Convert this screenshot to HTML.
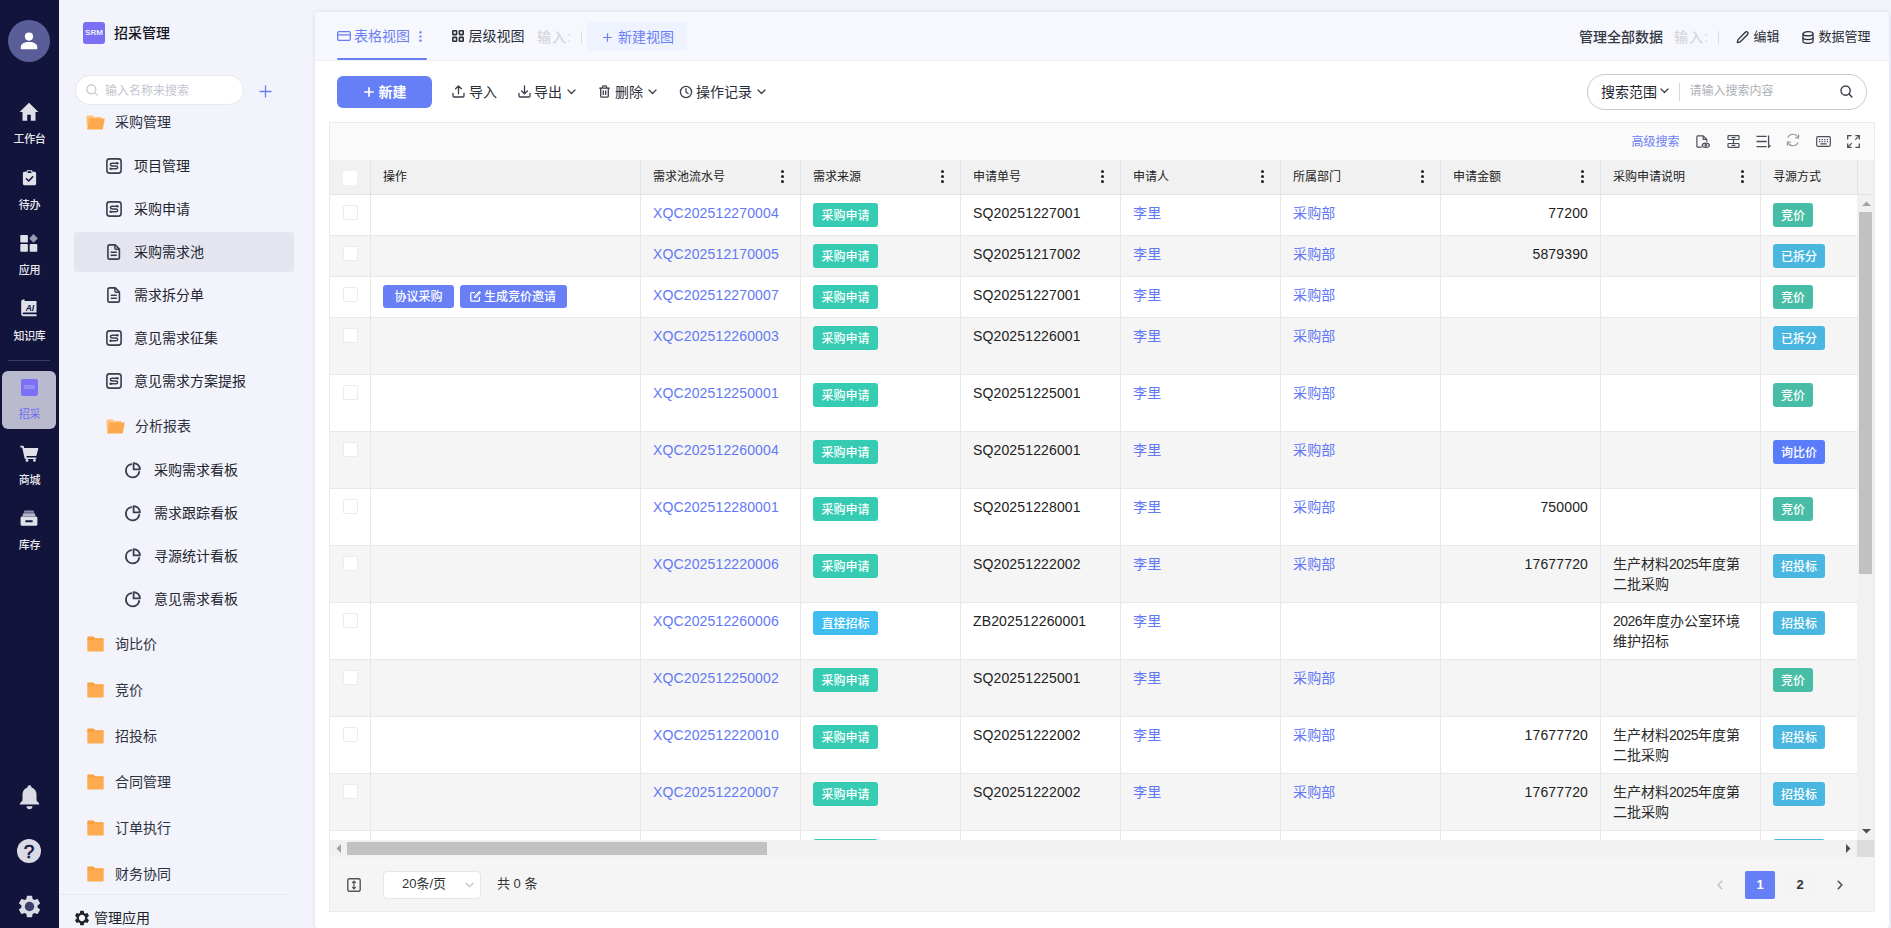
<!DOCTYPE html>
<html lang="zh-CN"><head><meta charset="utf-8"><title>招采管理</title>
<style>
*{box-sizing:border-box;margin:0;padding:0}
html,body{width:1891px;height:928px;overflow:hidden}
body{background:#f2f3fb;font-family:"Liberation Sans","Noto Sans CJK SC",sans-serif;position:relative;color:#1f2329;font-size:14px}
.a{position:absolute}
svg{display:block;overflow:visible}
.t{position:absolute;white-space:nowrap;line-height:20px;height:20px}
/* dark nav */
#nav{left:0;top:0;width:59px;height:928px;background:#12143c}
#nav .lb{position:absolute;left:0;width:59px;text-align:center;color:#e9e9ef;font-size:11px;line-height:16px;height:16px;font-weight:500;letter-spacing:-0.3px}
#nav .ic{position:absolute;left:0;width:59px}
#nav .ic svg{margin:0 auto}
/* side */
#side{left:59px;top:0;width:254px;height:928px;background:#f2f3fb}
#side .it{position:absolute;font-size:14px;line-height:20px;height:20px;color:#22252e;white-space:nowrap}
#side .ico{position:absolute}
/* card */
#card{left:315px;top:12px;width:1574px;height:916px;background:#fff;border-radius:4px;box-shadow:0 0 5px rgba(110,115,150,.16)}
#tabs{left:0;top:0;width:1574px;height:49px;background:#f7f8fd;border-radius:4px 4px 0 0;border-bottom:1px solid #f0f1f7}
/* table */
#tb{left:329px;top:122px;width:1546px;height:790px;border:1px solid #ebebeb;background:#fff;overflow:hidden}
.row{position:absolute;left:0;width:1527px;border-bottom:1px solid #e8e8e8}
.row.odd{background:#fff}
.row.even{background:#f5f5f5}
.vl{position:absolute;top:0;width:1px;background:#e8e8e8}
.cb{position:absolute;left:13px;top:10px;width:15px;height:15px;background:#fff;border:1px solid #ebebeb;border-radius:2px}
.c{position:absolute;top:8px;font-size:14px;line-height:20px;white-space:nowrap;color:#222;letter-spacing:.14px}
.lk{color:#6378f6}
.tag{position:absolute;top:8px;height:24px;line-height:26px;border-radius:3px;color:#fff;font-size:12px;padding:0;text-align:center;white-space:nowrap;font-weight:500}
.g1{background:#35ccb3}
.g2{background:#48bda5}
.b1{background:#4ab7e1}
.b2{background:#40bdf0}
.p1{background:#587cfa}
.btn{position:absolute;top:8px;height:23px;line-height:24px;border-radius:3px;color:#fff;font-size:12px;font-weight:500;background:#687ff6;white-space:nowrap;text-align:center}
.hd{position:absolute;top:0;font-size:12px;line-height:34px;color:#222;white-space:nowrap}
.dots{position:absolute;top:11px;width:3px}
.dots i{display:block;width:3px;height:3px;border-radius:50%;background:#222;margin-bottom:2px}
.ds{letter-spacing:0;color:#2a2a2a}
.nd{letter-spacing:-.56px}

</style></head><body>
<div id="nav" class="a">
  <!-- avatar -->
  <div class="a" style="left:8px;top:20px;width:42px;height:42px;border-radius:50%;background:#5a5e98"></div>
  <svg class="a" style="left:20px;top:32px" width="18" height="18" viewBox="0 0 18 18"><circle cx="9" cy="4.6" r="4.1" fill="#fff"/><path d="M0.8 17.2v-2.3c0-3 3.6-4.9 8.2-4.9s8.2 1.9 8.2 4.9v2.3z" fill="#fff"/></svg>

  <!-- 工作台 -->
  <svg class="a" style="left:19px;top:102px" width="20" height="20" viewBox="0 0 20 20"><path d="M10 .8L.6 10h2.900v8.800h4.700v-6h3.600v6h4.700V10h2.900z" fill="#dfdfe8"/></svg>
  <div class="lb" style="top:131px">工作台</div>

  <!-- 待办 -->
  <svg class="a" style="left:22px;top:170px" width="15" height="16" viewBox="0 0 17 19" preserveAspectRatio="none"><path d="M5.2 2.2V1.6C5.2.9 5.8.4 6.5.4h4c.7 0 1.3.5 1.3 1.2v.6h2.4c1 0 1.8.8 1.8 1.8v12.2c0 1-.8 1.8-1.8 1.8H2.8c-1 0-1.8-.8-1.8-1.8V4c0-1 .8-1.8 1.8-1.8z" fill="#e1e1ea"/><rect x="6.3" y="1.4" width="4.4" height="2.2" rx=".6" fill="#12143c"/><path d="M5 10.4l2.6 2.7 4.6-5" fill="none" stroke="#12143c" stroke-width="1.7" stroke-linecap="round" stroke-linejoin="round"/></svg>
  <div class="lb" style="top:197px">待办</div>

  <!-- 应用 -->
  <svg class="a" style="left:20px;top:234px" width="18" height="18" viewBox="0 0 18 18"><rect x="0.3" y=".9" width="7.600" height="7.600" rx=".8" fill="#e1e1ea"/><rect x="0.3" y="10.100" width="7.600" height="7.600" rx=".8" fill="#e1e1ea"/><rect x="9.700" y="10.100" width="7.600" height="7.600" rx=".8" fill="#e1e1ea"/><path d="M13.5 0l4.3 4.4-4.3 4.4-4.3-4.4z" fill="#9a9bb3"/></svg>
  <div class="lb" style="top:262px">应用</div>

  <!-- 知识库 -->
  <svg class="a" style="left:20px;top:299px" width="18" height="18" viewBox="0 0 18 18"><path d="M1.2 2.6C1.2 1.4 2.2.5 3.3 .5H4.6V2h11.9v11.5H3.6c-.6 0-1 .4-1 .9s.4.9 1 .9h12.9v1.9H3.4c-1.3 0-2.2-1-2.2-2.2z" fill="#e1e1ea"/><text x="9.9" y="11.6" font-family="Liberation Sans,sans-serif" font-weight="bold" font-style="italic" font-size="8.5" text-anchor="middle" fill="#12143c">AI</text></svg>
  <div class="lb" style="top:328px">知识库</div>

  <div class="a" style="left:8px;top:360px;width:42px;height:1px;background:#3a3d63"></div>

  <!-- 招采 active -->
  <div class="a" style="left:2px;top:371px;width:54px;height:58px;border-radius:6px;background:#b9bacd"></div>
  <div class="a" style="left:20.500px;top:379px;width:17px;height:17px;border-radius:2px;background:#7c71f6;color:#a9a7f0;font-size:5px;font-weight:bold;line-height:17px;text-align:center;letter-spacing:0">SRM</div>
  <div class="lb" style="top:406px;color:#6a6cf4;font-weight:400">招采</div>

  <!-- 商城 -->
  <svg class="a" style="left:20px;top:445px" width="19" height="17" viewBox="0 0 19 17"><path d="M0.4.8h2.4c.5 0 .9.3 1 .8l.4 1.5h13.2c.6 0 1 .6.8 1.1l-1.8 6.2c-.1.4-.5.7-.9.7H6.4l.3 1.3h9.6v1.5H5.5c-.4 0-.8-.3-.9-.7L2.2 2.4H.4z" fill="#e1e1ea"/><circle cx="7" cy="15.4" r="1.4" fill="#e1e1ea"/><circle cx="14.4" cy="15.4" r="1.4" fill="#e1e1ea"/></svg>
  <div class="lb" style="top:472px">商城</div>

  <!-- 库存 -->
  <svg class="a" style="left:20px;top:510px" width="18" height="16" viewBox="0 0 18 16"><path d="M4.4.4h9.2l.7 2.4H3.7z" fill="#8e8fa9"/><path d="M3.3 3.2h11.4l.9 3H2.4z" fill="#b5b6c8"/><path d="M.6 8.1c0-.9.7-1.5 1.5-1.5h13.8c.8 0 1.5.6 1.5 1.5v6.2c0 .8-.7 1.5-1.5 1.5H2.1c-.8 0-1.5-.7-1.5-1.5z" fill="#e1e1ea"/><rect x="5.3" y="10.3" width="7.4" height="2" rx=".5" fill="#12143c"/></svg>
  <div class="lb" style="top:537px">库存</div>

  <!-- bell -->
  <svg class="a" style="left:19px;top:785px" width="21" height="25" viewBox="0 0 21 25"><path d="M10.5.3c1.1 0 2 .8 2 1.9v.4c3 .9 5 3.6 5 6.8v6l2.6 2.9v1.3H.9v-1.3l2.6-2.9v-6c0-3.2 2-5.9 5-6.8v-.4c0-1.1.9-1.9 2-1.9z" fill="#dadbe4"/><path d="M7.5 21.2h6c0 1.7-1.3 3-3 3s-3-1.3-3-3z" fill="#dadbe4"/></svg>

  <!-- help -->
  <div class="a" style="left:17px;top:839px;width:24px;height:24px;border-radius:50%;background:#dadbe4;color:#12143c;font-weight:normal;-webkit-text-stroke:.6px #12143c;font-size:19px;line-height:25px;text-align:center">?</div>

  <!-- gear -->
  <svg class="a" style="left:15.500px;top:892.500px" width="27" height="27" viewBox="0 0 24 24"><path d="M19.14 12.94c.04-.3.06-.61.06-.94 0-.32-.02-.64-.07-.94l2.03-1.58c.18-.14.23-.41.12-.61l-1.92-3.32c-.12-.22-.37-.29-.59-.22l-2.39.96c-.5-.38-1.03-.7-1.62-.94l-.36-2.54c-.04-.24-.24-.41-.48-.41h-3.84c-.24 0-.43.17-.47.41l-.36 2.54c-.59.24-1.13.57-1.62.94l-2.39-.96c-.22-.08-.47 0-.59.22L2.74 8.87c-.12.21-.08.47.12.61l2.03 1.58c-.05.3-.09.63-.09.94s.02.64.07.94l-2.03 1.58c-.18.14-.23.41-.12.61l1.92 3.32c.12.22.37.29.59.22l2.39-.96c.5.38 1.03.7 1.62.94l.36 2.54c.05.24.24.41.48.41h3.84c.24 0 .44-.17.47-.41l.36-2.54c.59-.24 1.13-.56 1.62-.94l2.39.96c.22.08.47 0 .59-.22l1.92-3.32c.12-.22.07-.47-.12-.61l-2.01-1.58z" fill="#dadbe4"/><circle cx="12" cy="12" r="4.200" fill="#3d3f6b"/></svg>
</div>
<div id="side" class="a">
<div class="a" style="left:24px;top:22px;width:22px;height:22px;border-radius:3px;background:#7a6ff5;color:#efeefe;font-size:8px;font-weight:bold;line-height:22px;text-align:center">SRM</div>
<div class="a" style="left:55px;top:23px;font-size:14px;font-weight:500;line-height:20px;color:#15171f;white-space:nowrap">招采管理</div>
<div class="a" style="left:16px;top:75px;width:169px;height:30px;border-radius:15px;background:#fff;border:1px solid #e6e7f0"></div>
<svg class="a" style="left:27px;top:84px" width="12" height="12" viewBox="0 0 12 12"><circle cx="5.300" cy="5.300" r="4.500" fill="none" stroke="#c6c8d0" stroke-width="1.200"/><path d="M8.600 8.600l2.600 2.600" stroke="#c6c8d0" stroke-width="1.200" stroke-linecap="round"/></svg>
<div class="a" style="left:46px;top:82px;font-size:12px;line-height:18px;color:#c3c5cf;white-space:nowrap">输入名称来搜索</div>
<div class="a" style="left:192px;top:76px;width:30px;height:30px;border-radius:4px;background:#f1f4fd"></div>
<svg class="a" style="left:200px;top:85px" width="13" height="13" viewBox="0 0 13 13"><path d="M6.500 0.500v12M0.500 6.500h12" stroke="#6e7df5" stroke-width="1.300"/></svg>
<svg class="ico" style="left:27px;top:114.5px" width="19" height="15" viewBox="0 0 19 15"><path d="M0.500 1.200c0-.500.400-.800.800-.800h5.200l1.600 1.700h6.600c.500 0 .8.400.8.800v1.300H3.300L.5 11.500z" fill="#ffc27a"/><path d="M3.600 3.600h14.300c.5 0 .8.400.7.900l-1.700 9.200c-.1.400-.4.700-.8.700H1.800c-.5 0-.8-.4-.7-.900L2.800 4.300c.1-.4.400-.7.800-.7z" fill="#fca84c"/></svg>
<div class="it" style="left:56px;top:112px;color:#2e3240">采购管理</div>
<div class="a" style="left:15px;top:232px;width:220px;height:40px;border-radius:4px;background:#e4e5ee"></div>
<svg class="ico" style="left:46.5px;top:158px" width="16" height="16" viewBox="0 0 16 16"><rect x="0.9" y="0.9" width="14.2" height="14.2" rx="2.6" fill="none" stroke="#3a3e4c" stroke-width="1.6"/><path d="M11.3 5.2H6.1c-1 0-1.7.6-1.7 1.4s.7 1.4 1.7 1.4h3.8c1 0 1.7.6 1.7 1.4s-.7 1.4-1.7 1.4H4.7" fill="none" stroke="#3a3e4c" stroke-width="1.5"/><circle cx="11.4" cy="5.2" r="1.2" fill="#3a3e4c"/><circle cx="4.6" cy="10.8" r="1.2" fill="#3a3e4c"/></svg>
<div class="it" style="left:75px;top:156px;">项目管理</div>
<svg class="ico" style="left:46.5px;top:201px" width="16" height="16" viewBox="0 0 16 16"><rect x="0.9" y="0.9" width="14.2" height="14.2" rx="2.6" fill="none" stroke="#3a3e4c" stroke-width="1.6"/><path d="M11.3 5.2H6.1c-1 0-1.7.6-1.7 1.4s.7 1.4 1.7 1.4h3.8c1 0 1.7.6 1.7 1.4s-.7 1.4-1.7 1.4H4.7" fill="none" stroke="#3a3e4c" stroke-width="1.5"/><circle cx="11.4" cy="5.2" r="1.2" fill="#3a3e4c"/><circle cx="4.6" cy="10.8" r="1.2" fill="#3a3e4c"/></svg>
<div class="it" style="left:75px;top:199px;">采购申请</div>
<svg class="ico" style="left:46.5px;top:244px" width="16" height="16" viewBox="0 0 16 16"><path d="M3.6 0.9h5.6l4.2 4.2v8.3c0 .9-.7 1.7-1.7 1.7H3.6c-.9 0-1.7-.7-1.7-1.700V2.6c0-1 .8-1.700 1.700-1.700z" fill="none" stroke="#3a3e4c" stroke-width="1.6" stroke-linejoin="round"/><path d="M8.9 1.2v3c0 .6.500 1.100 1.100 1.100h3" fill="none" stroke="#3a3e4c" stroke-width="1.4"/><path d="M4.700 8.200h6.100M4.700 11.300h6.100" stroke="#3a3e4c" stroke-width="1.500"/></svg>
<div class="it" style="left:75px;top:242px;">采购需求池</div>
<svg class="ico" style="left:46.5px;top:287px" width="16" height="16" viewBox="0 0 16 16"><path d="M3.6 0.9h5.6l4.2 4.2v8.3c0 .9-.7 1.7-1.7 1.7H3.6c-.9 0-1.7-.7-1.7-1.700V2.6c0-1 .8-1.700 1.700-1.700z" fill="none" stroke="#3a3e4c" stroke-width="1.6" stroke-linejoin="round"/><path d="M8.9 1.2v3c0 .6.500 1.100 1.100 1.100h3" fill="none" stroke="#3a3e4c" stroke-width="1.4"/><path d="M4.700 8.200h6.100M4.700 11.300h6.100" stroke="#3a3e4c" stroke-width="1.500"/></svg>
<div class="it" style="left:75px;top:285px;">需求拆分单</div>
<svg class="ico" style="left:46.5px;top:330px" width="16" height="16" viewBox="0 0 16 16"><rect x="0.9" y="0.9" width="14.2" height="14.2" rx="2.6" fill="none" stroke="#3a3e4c" stroke-width="1.6"/><path d="M11.3 5.2H6.1c-1 0-1.7.6-1.7 1.4s.7 1.4 1.7 1.4h3.8c1 0 1.7.6 1.7 1.4s-.7 1.4-1.7 1.4H4.7" fill="none" stroke="#3a3e4c" stroke-width="1.5"/><circle cx="11.4" cy="5.2" r="1.2" fill="#3a3e4c"/><circle cx="4.6" cy="10.8" r="1.2" fill="#3a3e4c"/></svg>
<div class="it" style="left:75px;top:328px;">意见需求征集</div>
<svg class="ico" style="left:46.5px;top:373px" width="16" height="16" viewBox="0 0 16 16"><rect x="0.9" y="0.9" width="14.2" height="14.2" rx="2.6" fill="none" stroke="#3a3e4c" stroke-width="1.6"/><path d="M11.3 5.2H6.1c-1 0-1.7.6-1.7 1.4s.7 1.4 1.7 1.4h3.8c1 0 1.7.6 1.7 1.4s-.7 1.4-1.7 1.4H4.7" fill="none" stroke="#3a3e4c" stroke-width="1.5"/><circle cx="11.4" cy="5.2" r="1.2" fill="#3a3e4c"/><circle cx="4.6" cy="10.8" r="1.2" fill="#3a3e4c"/></svg>
<div class="it" style="left:75px;top:371px;">意见需求方案提报</div>
<svg class="ico" style="left:47px;top:418.5px" width="19" height="15" viewBox="0 0 19 15"><path d="M0.500 1.200c0-.500.400-.800.800-.800h5.200l1.600 1.700h6.600c.500 0 .8.400.8.800v1.300H3.300L.5 11.500z" fill="#ffc27a"/><path d="M3.600 3.600h14.300c.5 0 .8.400.7.900l-1.700 9.200c-.1.400-.4.700-.8.700H1.800c-.5 0-.8-.4-.7-.900L2.800 4.300c.1-.4.400-.7.800-.7z" fill="#fca84c"/></svg>
<div class="it" style="left:76px;top:416px;color:#2e3240">分析报表</div>
<svg class="ico" style="left:65px;top:461.5px" width="17" height="17" viewBox="0 0 17 17"><path d="M7.300 2.100A6.700 6.700 0 1 0 15.200 10" fill="none" stroke="#3a3e4c" stroke-width="1.900" stroke-linecap="round"/><path d="M9.600 1.100a6.300 6.300 0 0 1 6.300 6.300H9.600z" fill="none" stroke="#3a3e4c" stroke-width="1.800" stroke-linejoin="round"/></svg>
<div class="it" style="left:95px;top:460px;">采购需求看板</div>
<svg class="ico" style="left:65px;top:504.5px" width="17" height="17" viewBox="0 0 17 17"><path d="M7.300 2.100A6.700 6.700 0 1 0 15.200 10" fill="none" stroke="#3a3e4c" stroke-width="1.900" stroke-linecap="round"/><path d="M9.600 1.100a6.300 6.300 0 0 1 6.300 6.300H9.600z" fill="none" stroke="#3a3e4c" stroke-width="1.800" stroke-linejoin="round"/></svg>
<div class="it" style="left:95px;top:503px;">需求跟踪看板</div>
<svg class="ico" style="left:65px;top:547.5px" width="17" height="17" viewBox="0 0 17 17"><path d="M7.300 2.100A6.700 6.700 0 1 0 15.200 10" fill="none" stroke="#3a3e4c" stroke-width="1.900" stroke-linecap="round"/><path d="M9.600 1.100a6.300 6.300 0 0 1 6.300 6.300H9.600z" fill="none" stroke="#3a3e4c" stroke-width="1.800" stroke-linejoin="round"/></svg>
<div class="it" style="left:95px;top:546px;">寻源统计看板</div>
<svg class="ico" style="left:65px;top:590.5px" width="17" height="17" viewBox="0 0 17 17"><path d="M7.300 2.100A6.700 6.700 0 1 0 15.200 10" fill="none" stroke="#3a3e4c" stroke-width="1.900" stroke-linecap="round"/><path d="M9.600 1.100a6.300 6.300 0 0 1 6.300 6.300H9.600z" fill="none" stroke="#3a3e4c" stroke-width="1.800" stroke-linejoin="round"/></svg>
<div class="it" style="left:95px;top:589px;">意见需求看板</div>
<svg class="ico" style="left:27.5px;top:635.5px" width="17" height="16" viewBox="0 0 17 16"><path d="M0.300 1.400c0-.500.400-.900.900-.900h5.300l1.600 1.800h7.700c.5 0 .9.400.9.900v1H.3z" fill="#f9a03c"/><path d="M0.300 3.800h16.400v10.700c0 .5-.4.900-.9.900H1.200c-.5 0-.9-.4-.9-.9z" fill="#fdab4f"/></svg>
<div class="it" style="left:56px;top:634px;color:#2e3240">询比价</div>
<svg class="ico" style="left:27.5px;top:681.5px" width="17" height="16" viewBox="0 0 17 16"><path d="M0.300 1.400c0-.500.400-.900.900-.900h5.300l1.600 1.800h7.700c.5 0 .9.400.9.900v1H.3z" fill="#f9a03c"/><path d="M0.300 3.800h16.400v10.700c0 .5-.4.900-.9.900H1.200c-.5 0-.9-.4-.9-.9z" fill="#fdab4f"/></svg>
<div class="it" style="left:56px;top:680px;color:#2e3240">竞价</div>
<svg class="ico" style="left:27.5px;top:727.5px" width="17" height="16" viewBox="0 0 17 16"><path d="M0.300 1.400c0-.500.400-.900.900-.900h5.300l1.600 1.800h7.700c.5 0 .9.400.9.900v1H.3z" fill="#f9a03c"/><path d="M0.300 3.800h16.400v10.700c0 .5-.4.900-.9.900H1.200c-.5 0-.9-.4-.9-.9z" fill="#fdab4f"/></svg>
<div class="it" style="left:56px;top:726px;color:#2e3240">招投标</div>
<svg class="ico" style="left:27.5px;top:773.5px" width="17" height="16" viewBox="0 0 17 16"><path d="M0.300 1.400c0-.500.400-.900.900-.900h5.300l1.600 1.800h7.700c.5 0 .9.400.9.900v1H.3z" fill="#f9a03c"/><path d="M0.300 3.800h16.400v10.700c0 .5-.4.900-.9.900H1.200c-.5 0-.9-.4-.9-.9z" fill="#fdab4f"/></svg>
<div class="it" style="left:56px;top:772px;color:#2e3240">合同管理</div>
<svg class="ico" style="left:27.5px;top:819.5px" width="17" height="16" viewBox="0 0 17 16"><path d="M0.300 1.400c0-.500.400-.900.900-.900h5.300l1.600 1.800h7.700c.5 0 .9.400.9.900v1H.3z" fill="#f9a03c"/><path d="M0.300 3.800h16.400v10.700c0 .5-.4.900-.9.900H1.200c-.5 0-.9-.4-.9-.9z" fill="#fdab4f"/></svg>
<div class="it" style="left:56px;top:818px;color:#2e3240">订单执行</div>
<svg class="ico" style="left:27.5px;top:865.5px" width="17" height="16" viewBox="0 0 17 16"><path d="M0.300 1.400c0-.500.400-.900.900-.900h5.300l1.600 1.800h7.700c.5 0 .9.400.9.900v1H.3z" fill="#f9a03c"/><path d="M0.300 3.800h16.400v10.700c0 .5-.4.900-.9.900H1.200c-.5 0-.9-.4-.9-.9z" fill="#fdab4f"/></svg>
<div class="it" style="left:56px;top:864px;color:#2e3240">财务协同</div>
<div class="a" style="left:0;top:894px;width:230px;height:1px;background:#e6e7f0"></div>
<svg class="a" style="left:14px;top:909px" width="18" height="18" viewBox="0 0 24 24"><path d="M19.14 12.94c.04-.3.06-.61.06-.94 0-.32-.02-.64-.07-.94l2.03-1.58c.18-.14.23-.41.12-.61l-1.92-3.32c-.12-.22-.37-.29-.59-.22l-2.39.96c-.5-.38-1.03-.7-1.62-.94l-.36-2.54c-.04-.24-.24-.41-.48-.41h-3.84c-.24 0-.43.17-.47.41l-.36 2.54c-.59.24-1.13.57-1.62.94l-2.39-.96c-.22-.08-.47 0-.59.22L2.74 8.87c-.12.21-.08.47.12.61l2.03 1.58c-.05.3-.09.63-.09.94s.02.64.07.94l-2.03 1.58c-.18.14-.23.41-.12.61l1.92 3.32c.12.22.37.29.59.22l2.39-.96c.5.38 1.03.7 1.62.94l.36 2.54c.05.24.24.41.48.41h3.84c.24 0 .44-.17.47-.41l.36-2.54c.59-.24 1.13-.56 1.62-.94l2.39.96c.22.08.47 0 .59-.22l1.92-3.32c.12-.22.07-.47-.12-.61l-2.01-1.58zM12 16.2c-2.3 0-4.2-1.9-4.2-4.2s1.900-4.200 4.200-4.200 4.200 1.900 4.200 4.200-1.900 4.200-4.200 4.200z" fill="#20232c" fill-rule="evenodd"/></svg>
<div class="a" style="left:35px;top:908px;font-size:14px;line-height:20px;color:#1c1f28;white-space:nowrap">管理应用</div>
</div>
<div id="card" class="a"><div id="tabs" class="a"></div></div>
<svg class="a" style="left:337px;top:31px" width="14" height="10" viewBox="0 0 14 10"><rect x=".7" y=".7" width="12.600" height="8.600" rx="1.300" fill="none" stroke="#6a7ef4" stroke-width="1.300"/><path d="M.7 3.900h12.600" stroke="#6a7ef4" stroke-width="1.300"/></svg>
<div class="t" style="left:354px;top:26px;font-size:14px;color:#6a7ef4;">表格视图</div>
<svg class="a" style="left:418.500px;top:30.500px" width="3" height="11" viewBox="0 0 3 11"><rect x=".4" y=".2" width="2.200" height="2.200" rx=".6" fill="#6a7ef4"/><rect x=".4" y="4.400" width="2.200" height="2.200" rx=".6" fill="#6a7ef4"/><rect x=".4" y="8.600" width="2.200" height="2.200" rx=".6" fill="#6a7ef4"/></svg>
<div class="a" style="left:337px;top:58px;width:90px;height:2px;background:#6a7ef4;border-radius:1px"></div>
<svg class="a" style="left:452px;top:30px" width="12" height="12" viewBox="0 0 12 12"><g fill="none" stroke="#2a2e39" stroke-width="1.600"><rect x=".8" y=".8" width="3.800" height="3.800" rx=".5"/><rect x="7.400" y=".8" width="3.800" height="3.800" rx=".5"/><rect x=".8" y="7.400" width="3.800" height="3.800" rx=".5"/><rect x="7.400" y="7.400" width="3.800" height="3.800" rx=".5"/></g></svg>
<div class="t" style="left:468.5px;top:26px;font-size:14px;color:#2a2e39;">层级视图</div>
<div class="t" style="left:537px;top:27px;font-size:14px;color:#d5d6dc;letter-spacing:1px;font-weight:500">输入:</div>
<div class="a" style="left:581px;top:31px;width:1px;height:13px;background:#dcdde4"></div>
<div class="a" style="left:587px;top:22px;width:100px;height:29px;border-radius:4px;background:#eef3ff"></div>
<svg class="a" style="left:602.500px;top:32.500px" width="9" height="9" viewBox="0 0 9 9"><path d="M4.500 .2v8.600M.2 4.500h8.600" stroke="#6a7ef4" stroke-width="1.200"/></svg>
<div class="t" style="left:618px;top:27px;font-size:14px;color:#6a7ef4;">新建视图</div>
<div class="t" style="left:1579px;top:27px;font-size:14px;color:#333846;font-weight:500">管理全部数据</div>
<div class="t" style="left:1674px;top:27px;font-size:14px;color:#d5d6dc;letter-spacing:1px;font-weight:500">输入:</div>
<div class="a" style="left:1718px;top:31px;width:1px;height:13px;background:#dcdde4"></div>
<svg class="a" style="left:1736px;top:31px" width="13" height="13" viewBox="0 0 13 13"><path d="M9.300 1.200a1.600 1.600 0 0 1 2.300 2.300L4.300 10.800l-3 .8.800-3z" fill="none" stroke="#2a2e39" stroke-width="1.300" stroke-linejoin="round"/></svg>
<div class="t" style="left:1753.5px;top:27px;font-size:13px;color:#2a2e39;">编辑</div>
<svg class="a" style="left:1802px;top:30.500px" width="12" height="13" viewBox="0 0 12 13"><g fill="none" stroke="#2a2e39" stroke-width="1.300"><ellipse cx="6" cy="2.800" rx="5" ry="2.100"/><path d="M1 2.800v7.400c0 1.200 2.200 2.100 5 2.100s5-.9 5-2.100V2.800"/><path d="M1 6.500c0 1.200 2.200 2.100 5 2.100s5-.9 5-2.100"/></g></svg>
<div class="t" style="left:1818.5px;top:27px;font-size:13px;color:#2a2e39;">数据管理</div>
<div class="a" style="left:337px;top:76px;width:95px;height:32px;border-radius:6px;background:#667ef6"></div>
<svg class="a" style="left:364px;top:87px" width="10" height="10" viewBox="0 0 10 10"><path d="M5 .2v9.600M.2 5h9.600" stroke="#fff" stroke-width="1.700"/></svg>
<div class="t" style="left:378.5px;top:82px;font-size:14px;color:#fff;font-weight:bold">新建</div>
<svg class="a" style="left:452px;top:85px" width="13" height="13" viewBox="0 0 13 13"><g fill="none" stroke="#3a3e4a" stroke-width="1.300" stroke-linecap="round" stroke-linejoin="round"><path d="M6.500 8.800V1.200M3.600 3.800L6.500 1l2.900 2.800"/><path d="M1 8.300v2.500c0 .7.500 1.200 1.200 1.200h8.600c.7 0 1.200-.5 1.200-1.200V8.300"/></g></svg>
<div class="t" style="left:469px;top:82px;font-size:14px;color:#2a2e39;">导入</div>
<svg class="a" style="left:518px;top:85px" width="13" height="13" viewBox="0 0 13 13"><g fill="none" stroke="#3a3e4a" stroke-width="1.300" stroke-linecap="round" stroke-linejoin="round"><path d="M6.500 1v7.600M3.600 6L6.500 8.800 9.400 6"/><path d="M1 8.300v2.500c0 .7.500 1.200 1.200 1.200h8.600c.7 0 1.200-.5 1.200-1.200V8.300"/></g></svg>
<div class="t" style="left:534px;top:82px;font-size:14px;color:#2a2e39;">导出</div>
<svg class="a" style="left:567px;top:89px" width="9" height="6" viewBox="0 0 9 6"><path d="M1 1l3.500 3.500L8 1" fill="none" stroke="#3a3e4a" stroke-width="1.300" stroke-linecap="round" stroke-linejoin="round"/></svg>
<svg class="a" style="left:599px;top:85px" width="11" height="13" viewBox="0 0 11 13"><g fill="none" stroke="#3a3e4a" stroke-width="1.300" stroke-linecap="round" stroke-linejoin="round"><path d="M.7 3.200h9.600M3.500 3V1.700c0-.5.400-.9.900-.9h2.200c.5 0 .9.400.9.900V3"/><path d="M1.700 3.400v7.600c0 .7.500 1.200 1.200 1.200h5.200c.7 0 1.200-.5 1.200-1.200V3.400"/><path d="M4.300 5.800v3.600M6.700 5.800v3.600"/></g></svg>
<div class="t" style="left:615px;top:82px;font-size:14px;color:#2a2e39;">删除</div>
<svg class="a" style="left:648px;top:89px" width="9" height="6" viewBox="0 0 9 6"><path d="M1 1l3.500 3.500L8 1" fill="none" stroke="#3a3e4a" stroke-width="1.300" stroke-linecap="round" stroke-linejoin="round"/></svg>
<svg class="a" style="left:679px;top:85px" width="14" height="14" viewBox="0 0 14 14"><g fill="none" stroke="#3a3e4a" stroke-width="1.300" stroke-linecap="round" stroke-linejoin="round"><circle cx="7" cy="7" r="5.600"/><path d="M7 3.700V7l2.100 1.500"/></g></svg>
<div class="t" style="left:696px;top:82px;font-size:14px;color:#2a2e39;">操作记录</div>
<svg class="a" style="left:757px;top:89px" width="9" height="6" viewBox="0 0 9 6"><path d="M1 1l3.500 3.500L8 1" fill="none" stroke="#3a3e4a" stroke-width="1.300" stroke-linecap="round" stroke-linejoin="round"/></svg>
<div class="a" style="left:1587px;top:74px;width:280px;height:36px;border-radius:18px;border:1px solid #c9cad0;background:#fff"></div>
<div class="t" style="left:1601px;top:82px;font-size:14px;color:#20232c;">搜索范围</div>
<svg class="a" style="left:1660px;top:88px" width="9" height="6" viewBox="0 0 9 6"><path d="M1 1l3.500 3.500L8 1" fill="none" stroke="#3a3e4a" stroke-width="1.300" stroke-linecap="round" stroke-linejoin="round"/></svg>
<div class="a" style="left:1679px;top:83px;width:1px;height:18px;background:#d6d7dc"></div>
<div class="t" style="left:1689.5px;top:81px;font-size:12px;color:#adafb6;">请输入搜索内容</div>
<svg class="a" style="left:1840px;top:85px" width="13" height="13" viewBox="0 0 13 13"><circle cx="5.600" cy="5.600" r="4.600" fill="none" stroke="#3a3e4a" stroke-width="1.400"/><path d="M9 9l3 3" stroke="#3a3e4a" stroke-width="1.500" stroke-linecap="round"/></svg>
<div id="tb" class="a">
<div class="a" style="left:0;top:0;width:1544px;height:37px;background:#fafafa"></div>
<div class="t" style="left:1301.5px;top:8.5px;font-size:12px;color:#6a7ef4">高级搜索</div>
<svg class="a" style="left:1365.6px;top:11.7px" width="14" height="13" viewBox="0 0 14 13"><g fill="none" stroke="#4a4e5a" stroke-width="1.200" stroke-linejoin="round"><path d="M5.800 12.200H1.800c-.5 0-.9-.4-.9-.9V1.700c0-.5.4-.9.900-.9h5.400l3.600 3.600v2.400"/><path d="M7.200 1v3.400h3.400"/><ellipse cx="9.800" cy="10.300" rx="3.500" ry="2.100"/><circle cx="9.800" cy="10.300" r=".8"/></g></svg>
<svg class="a" style="left:1396.7px;top:12px" width="13" height="13" viewBox="0 0 13 13"><g fill="none" stroke="#4a4e5a" stroke-width="1.200"><rect x="1" y=".7" width="11" height="3.800" rx=".5"/><rect x="1" y="8.500" width="11" height="3.800" rx=".5"/><path d="M6.500 4.500v4M4.600 2.600h3.800M4.600 10.400h3.800"/></g></svg>
<svg class="a" style="left:1425.5px;top:12px" width="15" height="13" viewBox="0 0 15 13"><g fill="none" stroke="#4a4e5a" stroke-width="1.300"><path d="M.5 1.300h10.200M.5 6.500h10.200M.5 11.700h10.200M12.600 .6v11.800"/><path d="M12.600 12.600l1.900-2.400" stroke-width="1.200"/></g></svg>
<svg class="a" style="left:1456px;top:10px" width="14" height="14" viewBox="0 0 14 14"><g fill="none" stroke="#9a9da6" stroke-width="1.200" stroke-linecap="round"><path d="M12.200 4.600A5.700 5.700 0 0 0 2 4.200M1.800 9.400A5.700 5.700 0 0 0 12 9.800"/><path d="M12.600 1.800v3h-3M1.400 12.200v-3h3"/></g></svg>
<svg class="a" style="left:1485.5px;top:13px" width="15" height="11" viewBox="0 0 15 11"><g fill="none" stroke="#4a4e5a" stroke-width="1.200"><rect x=".7" y=".7" width="13.600" height="9.600" rx="1.200"/><path d="M3 3.600h1.200M5.600 3.600h1.200M8.200 3.600h1.200M10.800 3.600h1.200M3 5.600h1.200M5.600 5.600h1.200M8.200 5.600h1.200M10.800 5.600h1.200M4.300 7.800h6.400"/></g></svg>
<svg class="a" style="left:1516.5px;top:12px" width="13" height="13" viewBox="0 0 13 13"><g fill="none" stroke="#4a4e5a" stroke-width="1.300"><path d="M.7 4.600V.7h3.900M8.400.7h3.900v3.900M12.300 8.400v3.900H8.400M4.600 12.300H.7V8.400"/><path d="M8.200 4.800L12 1M4.800 8.200L1 12" stroke-width="1.100"/></g></svg>
<div class="a" style="left:0;top:37px;width:1544px;height:35px;background:#f1f1f1;border-bottom:1px solid #e2e2e2"></div>
<div class="a" style="left:13px;top:48px;width:14px;height:14px;background:#fff;border-radius:2px"></div>
<div class="hd" style="left:53px;top:37px">操作</div>
<div class="hd" style="left:323px;top:37px">需求池流水号</div>
<div class="hd" style="left:483px;top:37px">需求来源</div>
<div class="hd" style="left:643px;top:37px">申请单号</div>
<div class="hd" style="left:803px;top:37px">申请人</div>
<div class="hd" style="left:963px;top:37px">所属部门</div>
<div class="hd" style="left:1123px;top:37px">申请金额</div>
<div class="hd" style="left:1283px;top:37px">采购申请说明</div>
<div class="hd" style="left:1443px;top:37px">寻源方式</div>
<div class="dots" style="left:450.5px;top:47px"><i></i><i></i><i></i></div>
<div class="dots" style="left:610.5px;top:47px"><i></i><i></i><i></i></div>
<div class="dots" style="left:770.5px;top:47px"><i></i><i></i><i></i></div>
<div class="dots" style="left:930.5px;top:47px"><i></i><i></i><i></i></div>
<div class="dots" style="left:1090.5px;top:47px"><i></i><i></i><i></i></div>
<div class="dots" style="left:1250.5px;top:47px"><i></i><i></i><i></i></div>
<div class="dots" style="left:1410.5px;top:47px"><i></i><i></i><i></i></div>
<div class="vl" style="left:40px;top:37px;height:35px;background:#e3e3e3"></div>
<div class="vl" style="left:310px;top:37px;height:35px;background:#e3e3e3"></div>
<div class="vl" style="left:470px;top:37px;height:35px;background:#e3e3e3"></div>
<div class="vl" style="left:630px;top:37px;height:35px;background:#e3e3e3"></div>
<div class="vl" style="left:790px;top:37px;height:35px;background:#e3e3e3"></div>
<div class="vl" style="left:950px;top:37px;height:35px;background:#e3e3e3"></div>
<div class="vl" style="left:1110px;top:37px;height:35px;background:#e3e3e3"></div>
<div class="vl" style="left:1270px;top:37px;height:35px;background:#e3e3e3"></div>
<div class="vl" style="left:1430px;top:37px;height:35px;background:#e3e3e3"></div>
<div class="vl" style="left:1527px;top:37px;height:35px;background:#e3e3e3"></div>
<div class="a" style="left:0;top:72px;width:1527px;height:645px;overflow:hidden">
<div class="row odd" style="top:0px;height:41px">
<div class="cb"></div>
<div class="c lk" style="left:323px">XQC202512270004</div>
<div class="tag g1" style="left:483px;width:65px">采购申请</div>
<div class="c" style="left:643px">SQ20251227001</div>
<div class="c lk" style="left:803px">李里</div>
<div class="c lk" style="left:963px">采购部</div>
<div class="c" style="left:1111px;width:147px;text-align:right">77200</div>
<div class="tag g2" style="left:1443px;width:40px">竞价</div>
</div>
<div class="row even" style="top:41px;height:41px">
<div class="cb"></div>
<div class="c lk" style="left:323px">XQC202512170005</div>
<div class="tag g1" style="left:483px;width:65px">采购申请</div>
<div class="c" style="left:643px">SQ20251217002</div>
<div class="c lk" style="left:803px">李里</div>
<div class="c lk" style="left:963px">采购部</div>
<div class="c" style="left:1111px;width:147px;text-align:right">5879390</div>
<div class="tag b1" style="left:1443px;width:52px">已拆分</div>
</div>
<div class="row odd" style="top:82px;height:41px">
<div class="cb"></div>
<div class="btn" style="left:53px;width:71px">协议采购</div>
<div class="btn" style="left:130px;width:107px;text-align:left;padding-left:24px">生成竞价邀请</div>
<svg class="a" style="left:140px;top:14px" width="11" height="11" viewBox="0 0 11 11"><g fill="none" stroke="#fff" stroke-width="1.300" stroke-linejoin="round"><path d="M5 1.600H1.700c-.5 0-.9.400-.9.900v6.800c0 .5.400.9.900.9h6.800c.5 0 .9-.4.9-.9V6"/><path d="M9.400 0.700L4.900 5.200l-.3 1.300 1.300-.3 4.500-4.500z" stroke-width="1.100"/></g></svg>
<div class="c lk" style="left:323px">XQC202512270007</div>
<div class="tag g1" style="left:483px;width:65px">采购申请</div>
<div class="c" style="left:643px">SQ20251227001</div>
<div class="c lk" style="left:803px">李里</div>
<div class="c lk" style="left:963px">采购部</div>
<div class="tag g2" style="left:1443px;width:40px">竞价</div>
</div>
<div class="row even" style="top:123px;height:57px">
<div class="cb"></div>
<div class="c lk" style="left:323px">XQC202512260003</div>
<div class="tag g1" style="left:483px;width:65px">采购申请</div>
<div class="c" style="left:643px">SQ20251226001</div>
<div class="c lk" style="left:803px">李里</div>
<div class="c lk" style="left:963px">采购部</div>
<div class="tag b1" style="left:1443px;width:52px">已拆分</div>
</div>
<div class="row odd" style="top:180px;height:57px">
<div class="cb"></div>
<div class="c lk" style="left:323px">XQC202512250001</div>
<div class="tag g1" style="left:483px;width:65px">采购申请</div>
<div class="c" style="left:643px">SQ20251225001</div>
<div class="c lk" style="left:803px">李里</div>
<div class="c lk" style="left:963px">采购部</div>
<div class="tag g2" style="left:1443px;width:40px">竞价</div>
</div>
<div class="row even" style="top:237px;height:57px">
<div class="cb"></div>
<div class="c lk" style="left:323px">XQC202512260004</div>
<div class="tag g1" style="left:483px;width:65px">采购申请</div>
<div class="c" style="left:643px">SQ20251226001</div>
<div class="c lk" style="left:803px">李里</div>
<div class="c lk" style="left:963px">采购部</div>
<div class="tag p1" style="left:1443px;width:52px">询比价</div>
</div>
<div class="row odd" style="top:294px;height:57px">
<div class="cb"></div>
<div class="c lk" style="left:323px">XQC202512280001</div>
<div class="tag g1" style="left:483px;width:65px">采购申请</div>
<div class="c" style="left:643px">SQ20251228001</div>
<div class="c lk" style="left:803px">李里</div>
<div class="c lk" style="left:963px">采购部</div>
<div class="c" style="left:1111px;width:147px;text-align:right">750000</div>
<div class="tag g2" style="left:1443px;width:40px">竞价</div>
</div>
<div class="row even" style="top:351px;height:57px">
<div class="cb"></div>
<div class="c lk" style="left:323px">XQC202512220006</div>
<div class="tag g1" style="left:483px;width:65px">采购申请</div>
<div class="c" style="left:643px">SQ20251222002</div>
<div class="c lk" style="left:803px">李里</div>
<div class="c lk" style="left:963px">采购部</div>
<div class="c" style="left:1111px;width:147px;text-align:right">17677720</div>
<div class="c ds" style="left:1283px">生产材料<span class="nd">2025</span>年度第<br>二批采购</div>
<div class="tag b1" style="left:1443px;width:52px">招投标</div>
</div>
<div class="row odd" style="top:408px;height:57px">
<div class="cb"></div>
<div class="c lk" style="left:323px">XQC202512260006</div>
<div class="tag b2" style="left:483px;width:65px">直接招标</div>
<div class="c" style="left:643px">ZB202512260001</div>
<div class="c lk" style="left:803px">李里</div>
<div class="c ds" style="left:1283px"><span class="nd">2026</span>年度办公室环境<br>维护招标</div>
<div class="tag b1" style="left:1443px;width:52px">招投标</div>
</div>
<div class="row even" style="top:465px;height:57px">
<div class="cb"></div>
<div class="c lk" style="left:323px">XQC202512250002</div>
<div class="tag g1" style="left:483px;width:65px">采购申请</div>
<div class="c" style="left:643px">SQ20251225001</div>
<div class="c lk" style="left:803px">李里</div>
<div class="c lk" style="left:963px">采购部</div>
<div class="tag g2" style="left:1443px;width:40px">竞价</div>
</div>
<div class="row odd" style="top:522px;height:57px">
<div class="cb"></div>
<div class="c lk" style="left:323px">XQC202512220010</div>
<div class="tag g1" style="left:483px;width:65px">采购申请</div>
<div class="c" style="left:643px">SQ20251222002</div>
<div class="c lk" style="left:803px">李里</div>
<div class="c lk" style="left:963px">采购部</div>
<div class="c" style="left:1111px;width:147px;text-align:right">17677720</div>
<div class="c ds" style="left:1283px">生产材料<span class="nd">2025</span>年度第<br>二批采购</div>
<div class="tag b1" style="left:1443px;width:52px">招投标</div>
</div>
<div class="row even" style="top:579px;height:57px">
<div class="cb"></div>
<div class="c lk" style="left:323px">XQC202512220007</div>
<div class="tag g1" style="left:483px;width:65px">采购申请</div>
<div class="c" style="left:643px">SQ20251222002</div>
<div class="c lk" style="left:803px">李里</div>
<div class="c lk" style="left:963px">采购部</div>
<div class="c" style="left:1111px;width:147px;text-align:right">17677720</div>
<div class="c ds" style="left:1283px">生产材料<span class="nd">2025</span>年度第<br>二批采购</div>
<div class="tag b1" style="left:1443px;width:52px">招投标</div>
</div>
<div class="row odd" style="top:636px;height:57px">
<div class="cb"></div>
<div class="c lk" style="left:323px">XQC202512220009</div>
<div class="tag g1" style="left:483px;width:65px">采购申请</div>
<div class="c" style="left:643px">SQ20251222002</div>
<div class="c lk" style="left:803px">李里</div>
<div class="c lk" style="left:963px">采购部</div>
<div class="c" style="left:1111px;width:147px;text-align:right">17677720</div>
<div class="c ds" style="left:1283px">生产材料<span class="nd">2025</span>年度第<br>二批采购</div>
<div class="tag b1" style="left:1443px;width:52px">招投标</div>
</div>
<div class="vl" style="left:40px;top:0;height:645px"></div>
<div class="vl" style="left:310px;top:0;height:645px"></div>
<div class="vl" style="left:470px;top:0;height:645px"></div>
<div class="vl" style="left:630px;top:0;height:645px"></div>
<div class="vl" style="left:790px;top:0;height:645px"></div>
<div class="vl" style="left:950px;top:0;height:645px"></div>
<div class="vl" style="left:1110px;top:0;height:645px"></div>
<div class="vl" style="left:1270px;top:0;height:645px"></div>
<div class="vl" style="left:1430px;top:0;height:645px"></div>
</div>
<div class="a" style="left:1528px;top:37px;width:16px;height:35px;background:#f1f1f1;border-bottom:1px solid #e2e2e2"></div>
<div class="a" style="left:1527px;top:72px;width:17px;height:645px;background:#f1f1f1"></div>
<div class="a" style="left:1529px;top:89px;width:13px;height:362px;background:#c1c1c1"></div>
<svg class="a" style="left:1531.500px;top:78px" width="9" height="5" viewBox="0 0 9 5"><path d="M0 5L4.500 .500 9 5z" fill="#a3a3a3"/></svg>
<svg class="a" style="left:1531.500px;top:706px" width="9" height="5" viewBox="0 0 9 5"><path d="M0 0l4.500 4.500L9 0z" fill="#505050"/></svg>
<div class="a" style="left:0;top:717px;width:1527px;height:17px;background:#f1f1f1"></div>
<div class="a" style="left:1527px;top:717px;width:17px;height:17px;background:#dcdcdc"></div>
<div class="a" style="left:17px;top:719px;width:420px;height:13px;background:#c1c1c1"></div>
<svg class="a" style="left:6px;top:721px" width="5" height="9" viewBox="0 0 5 9"><path d="M5 0L.500 4.500 5 9z" fill="#a3a3a3"/></svg>
<svg class="a" style="left:1516px;top:721px" width="5" height="9" viewBox="0 0 5 9"><path d="M0 0l4.500 4.500L0 9z" fill="#505050"/></svg>
<div class="a" style="left:0;top:734px;width:1544px;height:54px;background:#f5f5f5"></div>
<svg class="a" style="left:17px;top:755px" width="14" height="14" viewBox="0 0 14 14"><rect x=".8" y=".8" width="12.400" height="12.400" rx="1.500" fill="none" stroke="#555" stroke-width="1.400"/><path d="M7 3.400v7.200M5.200 5L7 3.200 8.800 5M5.200 9L7 10.800 8.800 9" fill="none" stroke="#555" stroke-width="1.200"/></svg>
<div class="a" style="left:53px;top:748px;width:98px;height:28px;background:#fff;border:1px solid #e4e5ea;border-radius:4px"></div>
<div class="t" style="left:72px;top:751px;font-size:13px;color:#333">20条/页</div>
<svg class="a" style="left:135px;top:759px" width="9" height="6" viewBox="0 0 9 6"><path d="M.8 1l3.700 3.700L8.200 1" fill="none" stroke="#c0c2c9" stroke-width="1.200"/></svg>
<div class="t" style="left:167px;top:751px;font-size:13px;color:#333">共 0 条</div>
<svg class="a" style="left:1387px;top:757px" width="6" height="10" viewBox="0 0 6 10"><path d="M5.200 .8L1.200 5l4 4.200" fill="none" stroke="#c3c5cc" stroke-width="1.600"/></svg>
<div class="a" style="left:1415px;top:748px;width:30px;height:28px;border-radius:2px;background:#667ef6;color:#fff;font-size:13px;font-weight:bold;line-height:28px;text-align:center">1</div>
<div class="a" style="left:1455px;top:748px;width:30px;height:28px;border-radius:2px;background:#f4f4f5;color:#333;font-size:13px;font-weight:bold;line-height:28px;text-align:center">2</div>
<svg class="a" style="left:1507px;top:757px" width="6" height="10" viewBox="0 0 6 10"><path d="M.8 .8l4 4.200-4 4.200" fill="none" stroke="#555" stroke-width="1.600"/></svg>
</div>

</body></html>
